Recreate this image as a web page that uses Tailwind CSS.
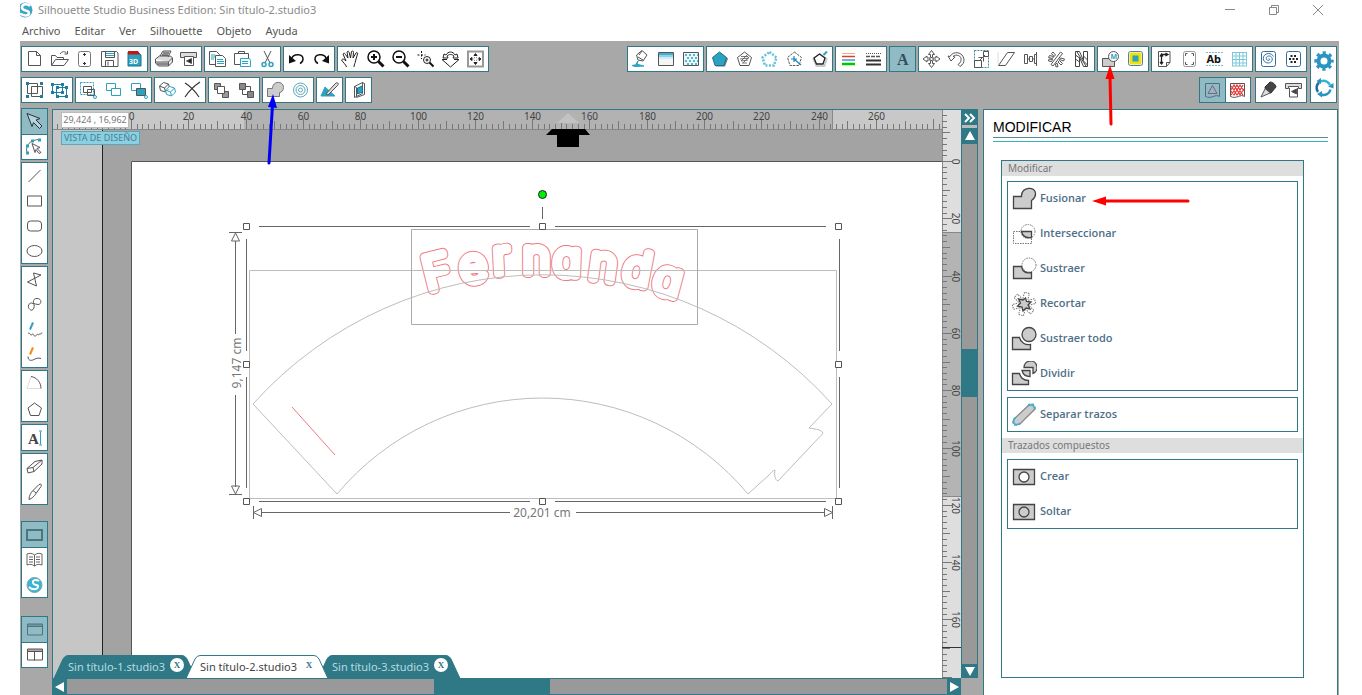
<!DOCTYPE html>
<html lang="es">

<head>
    <meta charset="UTF-8" />
    <meta name="viewport" content="width=device-width, initial-scale=1" />
    <title>Silhouette Studio Business Edition: Sin título-2.studio3</title>
    <script src="https://cdn.jsdelivr.net/npm/@tailwindcss/browser@4"></script>
</head>

<body class="bg-white font-['Noto_Sans','Open_Sans',sans-serif] text-[11px] text-[#555]">
    <div class="ml-5 mr-[23px] flex h-screen flex-col overflow-hidden">

        <!-- Title bar -->
        <header class="flex h-5 shrink-0 items-center text-[#8a8a8a]">
            <svg class="mr-1 h-5 w-3.5" viewBox="0 0 14 20">
                <circle cx="5" cy="10" r="7.5" fill="#3aa6c4" />
                <path d="M10 6C7 3 2 4 2 7.500c0 4 7 2 7 5.500 0 3-5 3.500-9 .5" fill="none" stroke="#fff" stroke-width="2.500" />
            </svg>
            <h1 class="flex-1">Silhouette Studio Business Edition: Sin título-2.studio3</h1>
            <div class="mr-[9px] flex gap-5">
                <button class="flex h-5 w-6 items-center justify-center" aria-label="Minimizar">
                    <svg class="size-3" viewBox="0 0 12 12" fill="none" stroke="#888"><path d="M1 5.500h10" /></svg>
                </button>
                <button class="flex h-5 w-6 items-center justify-center" aria-label="Restaurar">
                    <svg class="size-3" viewBox="0 0 12 12" fill="none" stroke="#888"><path d="M1.500 3.500h7v7h-7zM3.500 3.500v-2h7v7h-2" /></svg>
                </button>
                <button class="flex h-5 w-6 items-center justify-center" aria-label="Cerrar">
                    <svg class="size-3" viewBox="0 0 12 12" fill="none" stroke="#888"><path d="M1 1l10 10M11 1L1 11" /></svg>
                </button>
            </div>
        </header>

        <!-- Menu -->
        <nav class="flex h-[21px] shrink-0 items-center gap-3.5 pl-0.5 pt-px text-[#555]">
            <a href="#">Archivo</a>
            <a href="#">Editar</a>
            <a href="#">Ver</a>
            <a href="#">Silhouette</a>
            <a href="#">Objeto</a>
            <a href="#">Ayuda</a>
        </nav>

        <!-- Toolbars -->
        <div class="flex h-[68px] shrink-0 gap-[3px] bg-[#a8a8a8] pl-px pr-0.5 pt-[5px]">
            <div class="flex flex-1 flex-col gap-[5px]">
                <div class="flex gap-0.5">
                    <div data-tools="nuevo abrir biblioteca guardar sd"></div>
                    <div data-tools="imprimir enviar"></div>
                    <div data-tools="copiar pegar cortar"></div>
                    <div data-tools="deshacer rehacer"></div>
                    <div data-tools="mano acercar alejar zoomsel zoomdrag ajustar"></div>
                    <span class="flex-1"></span>
                    <div data-tools="relleno degradado motivo"></div>
                    <div data-tools="color boceto strass pixel trazar"></div>
                    <div data-tools="lineas estilos"></div>
                    <div data-tools="texto*"></div>
                    <div data-tools="mover girar escalar inclinar alinear replicar anidar"></div>
                    <div class="relative">
                        <div data-tools="modificar desplazar"></div>
                        <svg class="pointer-events-none absolute left-0 top-[18px] z-10 h-16 w-7" viewBox="0 0 28 64">
                            <path d="M14 60L13 12" stroke="#f00" stroke-width="3" stroke-linecap="round" />
                            <path d="M13 1l4.500 14h-9z" fill="#f00" />
                        </svg>
                    </div>
                    <div data-tools="pagina registro puntadas cuadricula"></div>
                    <div data-tools="espiral puntos"></div>
                </div>
                <div class="flex gap-0.5">
                    <div data-tools="agrupar desagrupar"></div>
                    <div data-tools="seleccion frente fondo"></div>
                    <div data-tools="duplicar eliminar"></div>
                    <div data-tools="adelante atras"></div>
                    <div class="relative">
                        <div data-tools="soldar concentrico"></div>
                        <svg class="pointer-events-none absolute -left-0.5 top-4 z-10 h-[72px] w-6" viewBox="0 0 24 72">
                            <path d="M9 70L12.500 12" stroke="#0000f8" stroke-width="3" stroke-linecap="round" />
                            <path d="M13 1l4 14-9-1z" fill="#0000f8" />
                        </svg>
                    </div>
                    <div data-tools="cuentagotas"></div>
                    <div data-tools="capa"></div>
                    <span class="flex-1"></span>
                    <div class="mr-0.5" data-tools="vista* relleno2"></div>
                    <div data-tools="lapiz cortadora"></div>
                </div>
            </div>
            <div class="flex h-[57px] w-[27px] flex-col justify-around border border-[#2f7886] bg-white">
                <button class="flex justify-center" aria-label="Preferencias">
                    <svg class="size-5" viewBox="0 0 20 20" fill="none" stroke="#2b94c0">
                        <circle cx="10" cy="10" r="5.500" stroke-width="4" />
                        <circle cx="10" cy="10" r="8.200" stroke-width="3" stroke-dasharray="3.200 3.240" stroke-dashoffset="1.600" />
                    </svg>
                </button>
                <button class="flex justify-center" aria-label="Actualizar">
                    <svg class="size-5" viewBox="0 0 20 20" fill="none" stroke-width="2.500">
                        <path d="M4 14a7 7 0 0 1 1-9.500" stroke="#1c6f96" />
                        <path d="M7 3.300a7 7 0 0 1 9 3.700" stroke="#35b4d2" />
                        <path d="M16.500 11.500A7 7 0 0 1 7 16.500" stroke="#2b94c0" />
                        <path d="M7 0v6L2.500 3zM19.500 5v5.500L14 8.500zM8 13v6.500L3 16z" fill="#2b94c0" />
                    </svg>
                </button>
            </div>
        </div>

        <div class="flex min-h-0 flex-1 bg-[#a8a8a8]">
            <!-- Drawing tools -->
            <aside class="-mt-px flex w-8 shrink-0 flex-col items-start gap-0.5 pl-px">
                <div data-tools="seleccionar* editar" data-dir="col"></div>
                <div data-tools="linea rectangulo redondeado elipse" data-dir="col"></div>
                <div data-tools="poligono curva libre suave" data-dir="col"></div>
                <div data-tools="arco regular" data-dir="col"></div>
                <div data-tools="escribir" data-dir="col"></div>
                <div data-tools="borrador cuchilla" data-dir="col"></div>
                <div class="mt-3.5" data-tools="diseno* libro tienda" data-dir="col"></div>
                <div class="mt-4" data-tools="ventana* dividida" data-dir="col"></div>
            </aside>

            <!-- Workspace -->
            <main class="flex min-w-0 flex-1 flex-col border-l border-t border-[#2f7886]">
                <div class="flex min-h-0 flex-1">
                    <div class="relative min-w-0 flex-1 overflow-hidden bg-white">
                        <svg class="size-full font-['Noto_Sans',sans-serif]">
                            <defs>
                                <text id="name" x="428 462 494 523 553 588 621 651" y="291 283 274 273 275 278 282 291" rotate="-14 -8 -3 0 2 8 11 15">Fernanda</text>
                            </defs>
                            <!-- drawing units start at the window's top left corner -->
                            <g transform="translate(-53 -110)" fill="none">
                                <path d="M53 129h50v600H53z" fill="#c6c6c6" />
                                <path d="M103 129h1200v32H131v600H103z" fill="#a3a3a3" />
                                <path d="M102.500 129v600" stroke="#222" />
                                <path d="M131.500 700V161.500H1300" stroke="#555" />
                                <path d="M53 110h1200v19H53z" fill="#c8c8c8" />
                                <path d="M244 110h589v19H244z" fill="#b2b2b2" />
                                <path d="M53 129.500H1300M832.500 110v19" stroke="#888" />
                                <g id="hRuler" stroke="#777"></g>
                                <path d="M568 113l11 10h-22z" fill="#c2c2c2" />
                                <path d="M552 129h33l5 6h-11v12h-22v-12h-11z" fill="#000" />

                                <!-- name on a curve, rounded outline -->
                                <g class="font-['Inter',sans-serif] text-[46px] font-extralight [font-feature-settings:'cv11'_1]" stroke-linejoin="round" stroke-linecap="round">
                                    <use href="#name" stroke="#ee7a82" stroke-width="10" />
                                    <use href="#name" stroke="#fff" stroke-width="8" fill="#fff" />
                                </g>

                                <g stroke="#bdbdbd">
                                    <path d="M249.500 270.500h587v228h-587z" />
                                    <path d="M411.500 229.500h286v95h-286z" stroke="#aaa" />
                                    <path d="M253 404A389 389 0 0 1 832 404L809 428c5 1 11 1 13.500 4 1 2-1 3-3 5L778 481c-3-1-4-6-3-11-2 0-4 3-6 5L748 494A268 268 0 0 0 337 494z" />
                                </g>
                                <path d="M292 407l43 48" stroke="#ee7a82" />

                                <g stroke="#666">
                                    <path d="M259 226.500h271M555 226.500h271M259 501.500h271M555 501.500h271M246.500 239v112M246.500 377v111M839.500 239v112M839.500 377v111M542.500 207v12" />
                                    <path d="M229 232.500h13M229 494.500h13M235.500 241v93M235.500 395v92M235.500 233l4 8h-8zM235.500 494l4-8h-8z" />
                                    <path d="M253.500 506v13M832.500 506v13M262 512.500h248M576 512.500h248M253.500 512.500l8-4v8zM832.500 512.500l-8-4v8z" />
                                    <g fill="#fff" stroke="#555">
                                        <path d="M243.500 223.500h6v6h-6zM539.500 223.500h6v6h-6zM835.500 223.500h6v6h-6zM243.500 361.500h6v6h-6zM835.500 361.500h6v6h-6zM243.500 498.500h6v6h-6zM539.500 498.500h6v6h-6zM835.500 498.500h6v6h-6z" />
                                    </g>
                                    <circle cx="542.500" cy="194.500" r="4" fill="#0e0" stroke="#222" />
                                </g>
                                <text x="542" y="517" text-anchor="middle" fill="#777" class="text-xs">20,201 cm</text>
                                <text transform="translate(241 363) rotate(-90)" text-anchor="middle" fill="#777" class="text-xs">9,147 cm</text>
                            </g>
                        </svg>

                        <!-- Cursor position and view badge -->
                        <div class="absolute left-2 top-0.5 flex h-4 w-[68px] items-center justify-center whitespace-nowrap border border-[#bbb] bg-white text-[9px] text-[#777]">29,424 , 16,962</div>
                        <div class="absolute left-2 top-[21px] flex h-3.5 w-[79px] items-center justify-center whitespace-nowrap border border-[#5fa5b8] bg-[#8bd0e2] text-[9px] text-[#4a7f90]">VISTA DE DISEÑO</div>

                        <!-- Document tabs -->
                        <div id="tabs" class="absolute bottom-0 left-0 flex"></div>
                    </div>

                    <svg class="h-full w-[19px] shrink-0 bg-[#dedede] font-['Noto_Sans',sans-serif]">
                        <g transform="translate(0 -110)">
                            <path d="M0 232h19v265H0z" fill="#b4b4b4" />
                            <path d="M.5 110v900M0 232.500h19M0 496.500h19" stroke="#888" />
                            <path d="M0 647.500h19" stroke="#333" />
                            <g id="vRuler" stroke="#777"></g>
                        </g>
                    </svg>

                    <div class="flex w-[17px] shrink-0 flex-col border-x border-[#2f7886] bg-[#999]">
                        <button class="flex h-[15px] items-center justify-center bg-[#2f7886]" aria-label="Ocultar panel">
                            <svg class="size-3" viewBox="0 0 12 12" fill="none" stroke="#fff" stroke-width="2"><path d="M1 2l4 4-4 4M6 2l4 4-4 4" /></svg>
                        </button>
                        <span class="h-[3px] bg-[#bbb]"></span>
                        <button class="flex h-4 items-center justify-center bg-[#2f7886]" aria-label="Subir">
                            <svg class="size-3" viewBox="0 0 12 12" fill="#fff"><path d="M6 1l5 9H1z" /></svg>
                        </button>
                        <span class="h-[205px]"></span>
                        <span class="h-12 bg-[#2f7886]"></span>
                        <span class="flex-1"></span>
                        <button class="flex h-3.5 items-center justify-center bg-[#2f7886]" aria-label="Bajar">
                            <svg class="size-3" viewBox="0 0 12 12" fill="#fff"><path d="M6 11L1 2h10z" /></svg>
                        </button>
                    </div>
                </div>

                <div class="flex h-[17px] shrink-0">
                    <div class="flex flex-1 border-y border-[#2f7886] bg-[#999]">
                        <button class="flex w-3.5 items-center justify-center bg-[#2f7886]" aria-label="Izquierda">
                            <svg class="size-3" viewBox="0 0 12 12" fill="#fff"><path d="M1 6l9-5v10z" /></svg>
                        </button>
                        <span class="w-[367px]"></span>
                        <span class="w-[116px] bg-[#2f7886]"></span>
                        <span class="flex-1"></span>
                        <button class="flex w-3.5 items-center justify-center bg-[#2f7886]" aria-label="Derecha">
                            <svg class="size-3" viewBox="0 0 12 12" fill="#fff"><path d="M11 6L2 1v10z" /></svg>
                        </button>
                    </div>
                    <span class="w-[17px] bg-[#a8a8a8]"></span>
                </div>
            </main>

            <!-- Side panel -->
            <section class="ml-[5px] mr-px flex w-[355px] shrink-0 flex-col border-x border-t border-[#2f7886] bg-white px-[9px] pt-2">
                <h2 class="font-['Liberation_Sans',sans-serif] text-sm leading-[19px] text-black">MODIFICAR</h2>
                <div class="h-[5px] border-y border-b-[#35b4c4] border-t-[#5a8a8e]"></div>
                <div class="mb-[17px] ml-2 mr-6 mt-[18px] flex flex-1 flex-col border border-[#2f7886]">
                    <h3 class="h-[15px] bg-[#dedede] pl-1.5 text-[10px] leading-[15px] text-[#777]">Modificar</h3>
                    <div class="mx-[5px] mt-[5px]" data-actions="Fusionar Interseccionar Sustraer Recortar Sustraer_todo Dividir"></div>
                    <div class="mx-[5px] my-1.5" data-actions="Separar_trazos"></div>
                    <h3 class="h-[15px] bg-[#dedede] pl-1.5 text-[10px] leading-[15px] text-[#777]">Trazados compuestos</h3>
                    <div class="mx-[5px] mt-1.5" data-actions="Crear Soltar"></div>
                </div>
            </section>
        </div>
    </div>

    <script>
        const B = "#2ba3c0";
        // toolbar icons, drawn on a 25x24 grid
        const icons = {
            nuevo: `<path d="M6.500 4.500h8l4 4v10h-12zM14.500 4.500v4h4"/>`,
            abrir: `<path d="M4.500 18V8.500h4l1.500 2h6.500v2M4.500 18.500l4-6h13l-4.500 6zM13 7c2-3 5-3 7-.5M20.500 4v3h-3"/>`,
            biblioteca: `<rect x="6.500" y="4.500" width="12" height="15" rx="2" stroke="#777"/><path d="M12.500 6v3M11 7.500h3M12.500 15v3M11 16.500h3" stroke="#333"/>`,
            guardar: `<path d="M4.500 4.500h15l1.500 1.500v13.500H4.500z"/><path d="M8.500 4.500h9v6h-9zM8.500 19.500v-6h8v6M11 14.500v4"/><path d="M9 6.500h8M9 8.500h8" stroke="${B}"/>`,
            sd: `<path d="M6 5h10l3 3v11H6z" fill="${B}" stroke="#1c6f96"/><path d="M6 4h10l2 3.500H6z" fill="#c01818" stroke="none"/><text x="7" y="17" font-size="7" font-weight="700" fill="#fff" stroke="none">3D</text>`,
            imprimir: `<path d="M9 9l3-5h8l-3 6M4.500 12l4-3h11l2 2-4 4h-13zM4.500 12v4l3 3h10v-4M17.500 19l4-4v-4" fill="#ddd"/><path d="M6 17h11M12 6h6M11 8h6" stroke="#333"/>`,
            enviar: `<path d="M4.500 5.500h16v5h-16z" fill="#ddd"/><path d="M8.500 9.500h9v9h-9z" fill="#fff"/><path d="M15.500 11.500l-5 2.500 5 2.500z" fill="#222"/>`,
            copiar: `<path d="M4.500 4.500h7l3 3v10h-10z" fill="#fff"/><path d="M10.500 8.500h7l3 3v8h-10z" fill="#fff"/><path d="M6 8h4M6 10h4M6 12h3M12 12.500h6M12 14.500h7M12 16.500h7" stroke="${B}"/>`,
            pegar: `<path d="M4.500 6.500h14v11h-14zM8.500 6.500v-2h6v2"/><path d="M10.500 11.500h9l1 2v6h-10z" fill="#fff" stroke="${B}"/><path d="M12 14.500h6M12 16.500h6" stroke="${B}"/>`,
            cortar: `<path d="M9 4l6 12M16 4L10 16"/><circle cx="9" cy="17.500" r="2" stroke="${B}" stroke-width="1.500"/><circle cx="16" cy="17.500" r="2" stroke="${B}" stroke-width="1.500"/>`,
            deshacer: `<path d="M8 11c2-5 11-4 11 1 0 2-1 3.500-3 4.500" stroke="#111" stroke-width="1.500"/><path d="M5 8v8.500l7-2.500z" fill="#111" stroke="none"/>`,
            rehacer: `<path d="M17 11C15 6 6 7 6 12c0 2 1 3.500 3 4.500" stroke="#111" stroke-width="1.500"/><path d="M20 8v8.500l-7-2.500z" fill="#111" stroke="none"/>`,
            mano: `<path d="M8.500 20c-1-3-3-4-5-7 1-1.500 2.500-1 4.500 1L5 7c1-1.500 2-.5 2.500.5L10 11 9 5c1-1.500 2-.5 2.200.5L12.500 11l1-6.500c1-1 2-.5 2 1L15 11l3-5c1-1 2 0 1.500 1l-2 7c0 2-1.500 3-1.500 6" stroke="#222"/>`,
            acercar: `<circle cx="11" cy="10" r="6" stroke="#111" stroke-width="1.500"/><path d="M15.500 14.500l5 5" stroke="#111" stroke-width="3"/><path d="M8 10h6M11 7v6" stroke="#111" stroke-width="2"/>`,
            alejar: `<circle cx="11" cy="10" r="6" stroke="#111" stroke-width="1.500"/><path d="M15.500 14.500l5 5" stroke="#111" stroke-width="3"/><path d="M8 10h6" stroke="#111" stroke-width="2"/>`,
            zoomsel: `<circle cx="14" cy="13" r="3.500" stroke="#222"/><path d="M16.500 15.500l4 4" stroke="#111" stroke-width="2"/><path d="M12.500 13h3M14 11.500v3" stroke="#111"/><path d="M8.500 4v8M4.500 8h8" stroke="#111" stroke-dasharray="2 1.500"/>`,
            zoomdrag: `<path d="M8 8c2-4 7-4 9 0l2-1 1 4h-5l1-2c-2-2-5-2-7 0l1 2H5l1-4zM4 12.500h5M16 12.500h5M4 12.500l8.500 7.500 8.500-7.500" stroke="#222"/>`,
            ajustar: `<path d="M5 4.500h15v15H5z" stroke="#999" stroke-width="2"/><path d="M12.500 6.500l1.500 2h-3zM12.500 17.500l1.500-2h-3zM7 12l2-1.500v3zM18 12l-2-1.500v3z" fill="#222" stroke="#222"/><path d="M11 10.500h3v3h-3z" stroke="#999" stroke-dasharray="1 1"/>`,
            relleno: `<path d="M8.500 8L14 3.500l5 4.500-4 6-5-1zM10 10l5 3M14 4l-3 4"/><path d="M10 14l-2 3 8 2-9 .5-3-1 5-1z" fill="${B}" stroke="${B}"/>`,
            degradado: `<path d="M5.500 5.500h15v13h-15z" fill="#f5f5f5"/><path d="M6 6h14v2H6z" fill="#3fb2d4" stroke="none"/><path d="M6 8h14v2H6z" fill="#8fd2e6" stroke="none"/><path d="M6 10h14v2H6z" fill="#d3edf5" stroke="none"/>`,
            motivo: `<path d="M5.500 5.500h15v13h-15z" fill="#e9f7fb"/><path d="M7 8h13M9 11h11M7 14h13M9 17h11" stroke="${B}" stroke-width="1.500" stroke-dasharray="2 2"/>`,
            color: `<path d="M13.500 6l7.500 5.500-3 8h-9l-3-8z" fill="#777" stroke="none"/><path d="M12.500 5l7 5.500-2.500 8H8l-2.500-8z" fill="${B}" stroke="#1c6f96"/>`,
            boceto: `<path d="M12.500 5l7 5.500-2.500 8H8l-2.500-8z"/><path d="M9 9.500h7M8 12l9-1M9 14l7-1M10 16h5M15 8l-6 6M17 10l-6 6" stroke-width=".8"/>`,
            strass: `<path d="M12.500 5l7 5.500-2.500 8H8l-2.500-8z" stroke="#62c2da" stroke-width="2.500" stroke-dasharray="2 1.400"/>`,
            pixel: `<path d="M12.500 5l7 5.500-2.500 8H8l-2.500-8z" stroke-dasharray="2.500 1"/><path d="M12 12l7 6M12 9v6M9 12h6" stroke="#1c84c0" stroke-width="1.200"/>`,
            trazar: `<path d="M13 7.500l6.500 4.500-2 7h-8l-3-7z" stroke="#ccc" stroke-width="2"/><path d="M12.500 7l5.500 4-2 6H9.500l-2.500-6z" fill="#fff" stroke="#222" stroke-width="1.300"/><path d="M16.500 8l3.500-3.500" stroke="${B}" stroke-width="2"/>`,
            lineas: `<path d="M6 6.500h13" stroke="#f2b07a"/><path d="M6 9.500h13" stroke="#e33" stroke-width="1.500"/><path d="M6 13h13" stroke="${B}" stroke-width="1.500"/><path d="M6 17h13" stroke="#00c800" stroke-width="2.500"/>`,
            estilos: `<path d="M5 6.500h15" stroke-dasharray="1 1"/><path d="M5 9.500h15" stroke-dasharray="4 1" stroke-width="1.500"/><path d="M5 13.500h15M5 17.500h15" stroke="#333" stroke-width="2"/>`,
            texto: `<text x="7" y="18" font-family="Liberation Serif" font-size="16" font-weight="700" fill="#31505c" stroke="none">A</text>`,
            mover: `<path d="M12.500 3.500l3 4h-2v3h-2v-3h-2zM12.500 20.500l3-4h-2v-3h-2v3h-2zM4 12l4-3v2h3v2H8v2zM21 12l-4-3v2h-3v2h3v2z"/>`,
            girar: `<path d="M4 9l3 5 4-4-2-.5c3-3 9-1 8 4-.3 2-1.500 3-3 4l2 2c3-2 4-4 4-7-1-8-11-9-14-3z"/>`,
            escalar: `<path d="M5.500 3.500h14v17h-14z" stroke="#46889b" stroke-dasharray="2 1"/><path d="M5.500 13.500h7v7h-7zM14.500 4.500h5v5h-5zM10 14l6-6M9.500 10.500h5v4"/>`,
            inclinar: `<path d="M4.500 18.500l9-13h7l-9 13z"/><path d="M4 5v13" stroke="#ddd"/>`,
            alinear: `<path d="M5.500 7.500h3v9h-3zM17.500 5v14M15.500 7.500h2v9h-2zM10.500 9.500h3v5h-3zM8.500 12h2M13.500 12h2"/>`,
            replicar: `<path d="M7 17.500L16.500 5l2 1.500L9 19zM4.500 10.500l1-2 4 1-1 2zM7.500 6.500l1.500-1.500 2.500 3-1.500 1.500zM4.500 14l.5-2 3.500.500-1 2zM15.500 12.500l1-1.500 4 1-1 2zM14 15l1.500-1.500 3 3-1.500 1.500zM11.500 17l1.500-1 1 3.500-2 .5z"/>`,
            anidar: `<path d="M6.500 4.500h4l4 9v-9h4v15h-4l-4-9v9h-4zM6.500 8l4 3M14.500 14l4 4M6.500 12l4 3M14.500 9l4 4M8 5l9 14" stroke="#444"/>`,
            modificar: `<path d="M4.500 11.500h12v8h-12z" fill="#ccc"/><circle cx="15.500" cy="9.500" r="5" fill="#fff"/><text x="12.500" y="12" font-size="7" font-weight="700" fill="${B}" stroke="none">M</text>`,
            desplazar: `<rect x="5.500" y="4.500" width="14" height="14" rx="2" stroke="#4a7fae"/><path d="M8 7h9v9H8z" fill="${B}" stroke="#f0e010" stroke-width="3"/>`,
            pagina: `<path d="M6.500 4.500h11.500v11l-3.500 4h-8zM14.500 19.500v-4H18"/><path d="M9.500 16.500v-9h6M8 9.500l1.500-2.500 1.500 2.500M8 15l1.500 2 1.500-2M13.500 6l2.500 1.500-2.500 1.500" stroke="#222" stroke-width="1.300"/>`,
            registro: `<rect x="6.500" y="4.500" width="12" height="15" rx="2" stroke="#999"/><path d="M8.500 9V6.500h2M16.500 9V6.500h-2M8.500 15v2.500h2M16.500 15v2.500h-2"/>`,
            puntadas: `<path d="M4 5.500h17M4 18.500h17" stroke="#79b7cc" stroke-dasharray="2 1"/><text x="4.500" y="16" font-size="11" font-weight="700" fill="#111" stroke="none">Ab</text>`,
            cuadricula: `<path d="M5.500 5v14M9 5v14M12.500 5v14M16 5v14M19.500 5v14M5 5.500h15M5 9h15M5 12.500h15M5 16h15M5 19h15" stroke="#7cc9dd"/>`,
            espiral: `<rect x="5.500" y="4.500" width="14" height="15" rx="2" stroke="#31709c"/><path d="M12.500 12c1-1 2 1 0 1.500-3 0-3-4 0-4.500 5-.5 5 6.500 0 7-7 0-7-9 0-9.500 2 0 4 1 5 3" stroke="#31709c"/>`,
            puntos: `<rect x="5.500" y="4.500" width="14" height="15" rx="2" stroke="#31709c"/><path d="M9.500 9h6.500M8 12h9.500M9.500 15h6.500" stroke="#222" stroke-width="2" stroke-dasharray="2 1.500"/>`,
            agrupar: `<path d="M5.500 5.500h10v10h-10zM9.500 8.500h11v10h-11z"/><path d="M4 4h3v3H4zM18 4h3v3h-3zM4 17h3v3H4zM18 17h3v3h-3z" fill="#1c7fa0" stroke="none"/>`,
            desagrupar: `<path d="M5.500 6.500h10v8h-10zM9.500 9.500h10v9h-10z" stroke="#1c7fa0"/><path d="M4 5h3v3H4zM14 5h3v3h-3zM4 13h3v3H4zM9 8h3v3H9zM18 8h3v3h-3zM9 17h3v3H9zM18 17h3v3h-3zM14 13h3v3h-3z" fill="#1c7fa0" stroke="none"/>`,
            seleccion: `<path d="M4.500 4.500h13v12h-13z" stroke="${B}" stroke-dasharray="2 1"/><path d="M7.500 8.500h8v6h-8zM11.500 11.500h7v6h-7z"/><circle cx="19" cy="19" r="1.500" stroke="${B}"/>`,
            frente: `<path d="M5.500 5.500h9v7h-9z" stroke="${B}"/><path d="M10.500 10.500h9v7h-9z" fill="#fff" stroke="${B}"/>`,
            fondo: `<path d="M5.500 5.500h9v7h-9z" fill="#fff" stroke="${B}"/><path d="M10.500 10.500h9v7h-9z" fill="${B}"/><circle cx="20" cy="19" r="1.500" fill="#fff" stroke="${B}"/>`,
            duplicar: `<path d="M4.500 8l4-3.500 5 1.500 1 4-4 4-5-1.500zM4.500 8l5 2 4-4M9.500 10l1 4"/><path d="M10.500 12l4-3.500 5 1.500 1 4-4 4-5-1.500zM10.500 12l5 2 4-4M15.500 14l1 4" fill="#fff" stroke="${B}"/>`,
            eliminar: `<path d="M5 5c5 3 10 8 14 14M20 4C14 8 9 13 5 19" stroke="#333" stroke-width="1.200"/>`,
            adelante: `<path d="M5.500 5.500h6v6h-6zM13.500 13.500h6v6h-6z" fill="#999"/><path d="M8.500 8.500h7v7h-7z" fill="#fff"/>`,
            atras: `<path d="M8.500 8.500h8v8h-8z" fill="#fff"/><path d="M5.500 5.500h6v6h-6zM13.500 13.500h6v6h-6z" fill="#888"/>`,
            soldar: `<path d="M4.500 10.500h5c0-8 11-8 11-1 0 3-2 5-4 5v4h-12z" fill="#ccc" stroke="#777"/>`,
            concentrico: `<circle cx="12.500" cy="12" r="7" stroke="#56a9bd"/><circle cx="12.500" cy="12" r="4.500" stroke="#56a9bd"/><circle cx="12.500" cy="12" r="2" stroke="#56a9bd"/>`,
            cuentagotas: `<path d="M8 9L4 18h14z" fill="${B}" stroke="${B}"/><path d="M9 16l7-8 3-3c2-1 3 1 1.500 2.500L18 10l-7 7z" fill="#ddd"/>`,
            capa: `<path d="M8.500 8.500l8-4v11l-8 4zM8.500 8.500l2 1v9M16.500 4.500l2 1v11l-8 3"/><path d="M11.500 10l5-2v6l-5 2z" fill="${B}" stroke="#1c6f96"/>`,
            vista: `<path d="M5.500 5.500h14v13c-4-3-8 3-14 0z" stroke="#4c6f88"/><path d="M12.500 7.500l4.500 8H8z" stroke="#8a5a78"/>`,
            relleno2: `<path d="M5.500 5.500h14v13c-4-3-8 3-14 0z"/><path d="M6 8l3 4 3-5 3 5 3-5M6 13l3 4 3-5 3 5 4-6M6 12l3-5 3 5 3-5 4 6M6 17l3-4 3 4 3-4 3 4" stroke="#e83838" stroke-width="1.200"/>`,
            lapiz: `<path d="M9 9l5-5c3 0 6 3 6 5l-5 6c-3 0-6-2-6-6z" fill="#444" stroke="#333"/><path d="M9 11l-4 8 9-4" fill="#ddd"/>`,
            cortadora: `<path d="M4.500 5.500h16v5h-3v-2h-10v2h-3z" fill="#ddd"/><path d="M8.500 10v9h8v-9"/><path d="M15.500 11l-5 2.500 5 2.500z" fill="#444"/>`,
            seleccionar: `<path d="M5 4l13 5-4 1.500 6 6-2.500 2.500-6-6-1.500 4z" fill="#b8d4da" stroke="#234"/>`,
            editar: `<path d="M5 18c-2-7 3-13 13-13" stroke="#666"/><path d="M10 9l8 4-3 1 4 4-2 1-3-4-1 3z" fill="#fff"/><path d="M4 10h3v3H4zM9 5h3v3H9zM16 4h3v3h-3zM4 17h3v3H4z" fill="${B}" stroke="none"/>`,
            linea: `<path d="M6.500 18.500l12-12"/>`,
            rectangulo: `<path d="M5.500 7.500h14v10h-14z"/>`,
            redondeado: `<rect x="5.500" y="7.500" width="14" height="10" rx="3"/>`,
            elipse: `<ellipse cx="12.500" cy="12.500" rx="7.500" ry="5.500"/>`,
            poligono: `<path d="M5.500 14.500L19 7.500l-7.500-2 3 13z"/>`,
            curva: `<path d="M11 11c-3-2-6 2-4 5 3 4 6 0 5-4-1-3-1-6 3-6 5 0 5 6 1 6-2 0-3-1-5-1z"/>`,
            libre: `<path d="M8 12l3-7" stroke="${B}" stroke-width="2"/><path d="M6 16c2-2 2 3 4 1s2 4 4 1 2 1 3-1 2 1 3-2"/>`,
            suave: `<path d="M8 12l3-7" stroke="#f08c10" stroke-width="2"/><path d="M6 14c0 5 4 4 6 3s4-2 7-1"/>`,
            arco: `<path d="M9 5L5 17h14" stroke="#ddd"/><path d="M9 5c6 1 10 6 10 12"/>`,
            regular: `<path d="M12.500 6.500l7 5-2.500 7.500H8.500L6 11.500z"/>`,
            escribir: `<text x="6" y="18" font-family="Liberation Serif" font-size="15" font-weight="700" fill="#444" stroke="none">A</text><path d="M18.500 6v13M17 5.500h3M17 19.500h3" stroke="${B}"/>`,
            borrador: `<path d="M5 14l8-7 7-1.500v4L12 17l-6 1.500zM5 14l6-1 9-7.500M11 13l1 4"/>`,
            cuchilla: `<path d="M7 20c0-4 2-7 4-9l6-6c2-1 3 0 2 2l-5 7c-2 3-4 5-7 6zM11 11l3 2.500"/>`,
            diseno: `<path d="M5 7.500h15v10H5z" stroke="#4a7680" stroke-width="2"/>`,
            libro: `<path d="M5 6.500c3-1 5-1 7.500 1 2.500-2 4.500-2 7.500-1v11c-3-1-5-1-7.500 1-2.500-2-4.500-2-7.500-1zM12.500 7.500v11M7 9.500h4M7 12h4M7 14.500h4M14 9.500h4M14 12h4M14 14.500h4" stroke-width=".9"/>`,
            tienda: `<circle cx="12.500" cy="12.500" r="7.500" fill="#3ab4d4" stroke="#7aa"/><path d="M17 8.500c-3-2-7-1-6 2s6 1 5 4-6 3-9 0" stroke="#fff" stroke-width="2"/>`,
            ventana: `<path d="M5.500 6.500h15v11h-15zM5.500 9h15M5.500 7.500h15" stroke="#4a7680"/>`,
            dividida: `<path d="M5.500 6.500h15v11h-15zM5.500 9h15M5.500 7.500h15M12.500 9v9"/>`,
        };

        document.querySelectorAll("[data-tools]").forEach((group) => {
            const column = group.dataset.dir === "col";
            group.classList.add("flex", "border", "border-[#2f7886]", "bg-white");
            if (column) group.classList.add("flex-col");
            group.innerHTML = group.dataset.tools.split(" ").map((tool) => {
                const name = tool.replace("*", "");
                const state = tool.endsWith("*") ? "bg-[#90bac4] outline outline-[#2f7886]" : "hover:bg-[#dcecf0]";
                const size = column ? "h-[25px] w-[25px]" : "h-6 w-[25px]";
                return `<button aria-label="${name}" class="${size} ${state}">
                    <svg class="${size}" viewBox="0 0 25 24" fill="none" stroke="#555">${icons[name]}</svg>
                </button>`;
            }).join("");
        });

        const dash = `stroke="#777" stroke-width="1" stroke-dasharray="1.500 1" fill="none"`;
        const strips = [15, 75, 135, 195, 255, 315].map((a) => `<path d="M10.500 8V1.500h5V8" transform="rotate(${a} 13 13)" ${dash}/>`).join("");
        // panel icons, 26x26
        const actions = {
            "Fusionar": `<path d="M2.500 10.500h8C10 0 25 0 24.500 8c0 4-2 5-4 6.500v8h-18z"/>`,
            "Interseccionar": `<path d="M2.500 10.500h18v12h-18z" ${dash}/><circle cx="17" cy="10.500" r="7" ${dash}/><path d="M10.500 10.500h10v6c-6 1-9-2-10-6z"/>`,
            "Sustraer": `<circle cx="18" cy="9" r="7" ${dash}/><path d="M2.500 10.500h8c1 5 5 7 10 6v6h-18z"/>`,
            "Recortar": `${strips}<path d="M14.500 7l1 3.500 4.500.5-3 3 2 4-4-1-3 3-1-4-4.500-1 3-3-2-4 4.500 1z"/>`,
            "Sustraer todo": `<path d="M1.500 11.500h7c1 5 6 8 11 7v5h-18z"/><circle cx="18" cy="8.500" r="7"/>`,
            "Dividir": `<path d="M1.500 12.500h7c1 4 4 7 9 7v4h-16z"/><path d="M13 6.500A6.500 6.500 0 1 1 22 12.500v-6z"/><path d="M11 9.500h8v6c-5 0-7-2-8-6z"/>`,
            "Separar trazos": `<path d="M3 17L18 3h4l2 4L9 22l-5 1-2-3z" stroke="#888"/><path d="M17 4l1.500-1.500H22L24 6l-1.500 2M4.500 15.500L2.500 18v4l4 1 2.500-1.500" fill="none" stroke="#3fb2d4" stroke-width="2" stroke-dasharray="3 1"/>`,
            "Crear": `<path d="M2.500 5.500h21v15h-21z"/><circle cx="13" cy="13" r="5" fill="#fff"/>`,
            "Soltar": `<path d="M2.500 5.500h21v15h-21z"/><circle cx="13" cy="13" r="5"/>`,
        };
        const redArrow = `<svg class="ml-1.5 mt-1 h-3 w-[98px]" viewBox="0 0 98 12"><path d="M12 6h84" stroke="#f00" stroke-width="3" stroke-linecap="round"/><path d="M0 6l14-4.500v9z" fill="#f00"/></svg>`;

        document.querySelectorAll("[data-actions]").forEach((box) => {
            box.classList.add("flex", "flex-col", "gap-0.5", "border", "border-[#2f7886]");
            box.innerHTML = box.dataset.actions.split(" ").map((key) => {
                const label = key.replace("_", " ");
                return `<button class="flex h-[33px] w-full items-center pl-[3px] text-left font-['Open_Sans','Noto_Sans',sans-serif] text-[11px] font-semibold text-[#4f6f88]">
                    <svg class="mr-[3px] size-[26px]" viewBox="0 0 26 26" fill="#ccc" stroke="#444" stroke-width="1.300">${actions[label]}</svg>
                    ${label}${label === "Fusionar" ? redArrow : ""}
                </button>`;
            }).join("");
        });

        // rulers: one tick every 2 units, 57.3px for 20 units
        const tickGap = 5.73;
        const lastH = 260;
        const lastV = 160;
        let h = "", v = "";
        for (let i = -13; i < 200; i++) {
            const pos = i * tickGap;
            const len = i % 10 === 0 ? 10 : i % 5 === 0 ? 8 : 5;
            const x = Math.round(131 + pos) + 0.5;
            const y = Math.round(161 + pos) + 0.5;
            h += `<path d="M${x} 129v-${len}"/>`;
            if (y > 110) v += `<path d="M0 ${y}h${len}"/>`;
            if (i % 10 !== 0 || i < 0) continue;
            if (i * 2 <= lastH) h += `<text x="${x}" y="120" text-anchor="middle" stroke="none" fill="#444" class="text-[10px]">${i * 2}</text>`;
            if (i * 2 <= lastV) v += `<text transform="translate(10 ${y}) rotate(90)" text-anchor="middle" stroke="none" fill="#444" class="text-[10px]">${i * 2}</text>`;
        }
        document.getElementById("hRuler").innerHTML = h;
        document.getElementById("vRuler").innerHTML = v;

        document.getElementById("tabs").innerHTML = [1, 2, 3].map((n) => {
            const open = n === 2;
            return `<div class="relative flex h-[23px] w-[132px] items-center pl-[15px] ${open ? "z-10 text-[#444]" : "text-[#b5dbe2]"}">
                <svg class="absolute left-0 top-0 h-[23px] w-36" viewBox="0 0 144 23"><path d="M1 23.500L10 4q2-3.500 5-3.500h114q3 0 5 3.500l9 19.500" fill="${open ? "#fff" : "#2f7886"}" stroke="#2f7886"/></svg>
                <button class="relative w-[102px] whitespace-nowrap pt-0.5 text-left">Sin título-${n}.studio3</button>
                <button class="relative mb-1 size-3.5 rounded-full bg-white font-['Liberation_Serif',serif] text-[9px] font-bold leading-3 text-[#2f7886]" aria-label="Cerrar pestaña">X</button>
            </div>`;
        }).join("");
    </script>
</body>

</html>
